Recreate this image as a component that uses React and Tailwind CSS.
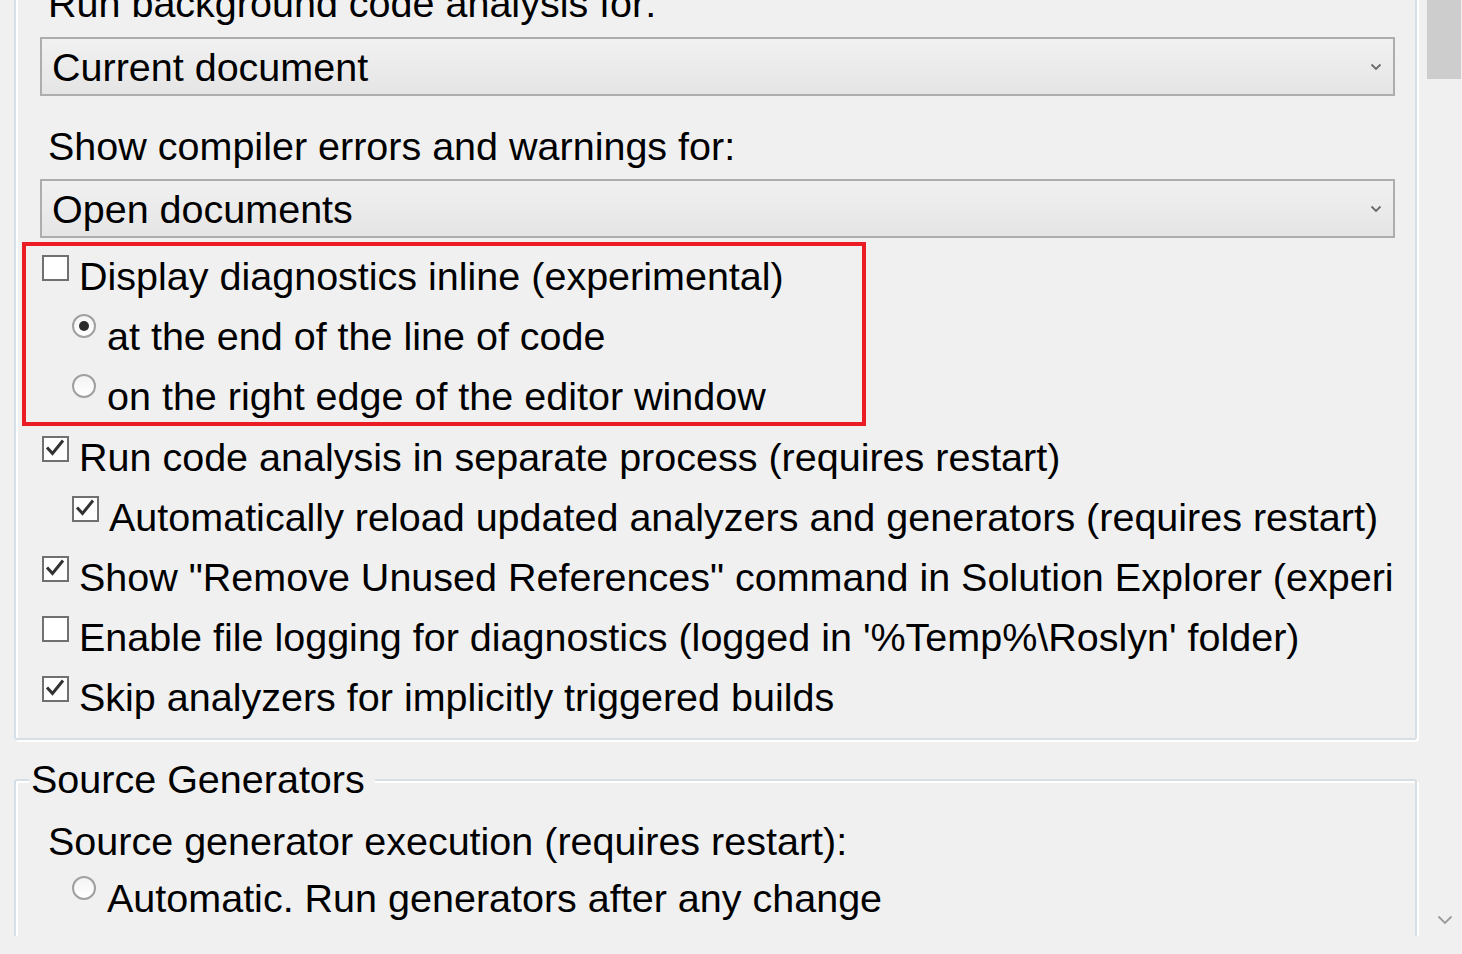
import React from 'react';

const font = "font-['Liberation_Sans',Arial,sans-serif]";

function Checkbox({ checked }) {
  return (
    <div className="w-[27px] h-[26px] shrink-0 border-2 border-[#707070] bg-white mt-[9px]">
      {checked && (
        <svg width="23" height="22" viewBox="0 0 23 22" className="block">
          <path d="M3 9.5 L8.5 15.5 L19 2.5" fill="none" stroke="#333" strokeWidth="3" strokeLinejoin="miter" />
        </svg>
      )}
    </div>
  );
}

function Radio({ checked }) {
  return (
    <div className="w-[24px] h-[24px] shrink-0 mt-[8px] rounded-full border-2 border-[#a0a0a0] bg-linear-to-b from-[#f4f4f4] to-white flex items-center justify-center">
      {checked && <div className="w-[10px] h-[10px] rounded-full bg-[#2a2a2a]" />}
    </div>
  );
}

function CheckRow({ checked, indent, children }) {
  return (
    <div className={`h-[60.2px] flex items-start gap-[10px] w-full overflow-hidden ${indent ? 'pl-[32px]' : 'pl-[2px]'}`}>
      <Checkbox checked={checked} />
      <span className="h-[60.2px] leading-[60.2px] whitespace-nowrap">{children}</span>
    </div>
  );
}

function RadioRow({ checked, children }) {
  return (
    <div className="h-[60.2px] flex items-start gap-[11px] w-full overflow-hidden pl-[32px]">
      <Radio checked={checked} />
      <span className="h-[60.2px] leading-[60.2px] whitespace-nowrap">{children}</span>
    </div>
  );
}

function Label({ children, className = '' }) {
  return <div className={`h-[45px] leading-[45px] ml-[8px] whitespace-nowrap ${className}`}>{children}</div>;
}

function Dropdown({ value, className = '' }) {
  return (
    <div className={`h-[59px] w-[1355px] border-2 border-[#adadad] bg-linear-to-b from-[#f1f1f1] to-[#e5e5e5] flex items-center pl-[10px] pr-[11px] ${className}`}>
      <span className="flex-1 pt-[3px] whitespace-nowrap">{value}</span>
      <svg width="12" height="8" viewBox="0 0 12 8">
        <path d="M1.5 1.5 L6 6 L10.5 1.5" fill="none" stroke="#6a6a6a" strokeWidth="1.8" />
      </svg>
    </div>
  );
}

const groupBox =
  'ml-[14px] w-[1403px] border-2 border-[#d5dfe5] rounded-[3px] shadow-[inset_2px_2px_0_#ffffff,2px_2px_0_#ffffff] pl-[24px] pr-[20px]';

export default function App() {
  return (
    <div className={`w-[1462px] h-[954px] bg-[#f0f0f0] text-black text-[39.5px] overflow-hidden ${font}`}>
      <div className="flex h-[936px]">
        <div className="w-[1425px] h-[936px] overflow-hidden flex flex-col">
          {/* Analysis group */}
          <div className={`${groupBox} mt-[-30px] pt-[9px] pb-[10px] shrink-0`}>
            <Label>Run background code analysis for:</Label>
            <Dropdown value="Current document" className="mt-[11px]" />
            <Label className="mt-[28px]">Show compiler errors and warnings for:</Label>
            <Dropdown value="Open documents" className="mt-[10px]" />

            <div className="mt-[8px]">
              <div className="relative">
                <div className="absolute left-[-18px] top-[-4px] w-[844px] h-[184px] border-4 border-[#ec1c24] pointer-events-none" />
                <CheckRow checked={false}>Display diagnostics inline (experimental)</CheckRow>
                <RadioRow checked>at the end of the line of code</RadioRow>
                <RadioRow>on the right edge of the editor window</RadioRow>
              </div>
              <CheckRow checked>Run code analysis in separate process (requires restart)</CheckRow>
              <CheckRow checked indent>
                Automatically reload updated analyzers and generators (requires restart)
              </CheckRow>
              <CheckRow checked>Show "Remove Unused References" command in Solution Explorer (experimental)</CheckRow>
              <CheckRow checked={false}>Enable file logging for diagnostics (logged in '%Temp%\Roslyn' folder)</CheckRow>
              <CheckRow checked>Skip analyzers for implicitly triggered builds</CheckRow>
            </div>
          </div>

          {/* Source Generators group */}
          <div className={`${groupBox} relative mt-[39px] pt-[38px] shrink-0 h-[400px]`}>
            <div className="absolute left-[13px] top-[-24px] h-[45px] leading-[45px] pl-[2px] pr-[10px] bg-[#f0f0f0] whitespace-nowrap">
              Source Generators
            </div>
            <Label>Source generator execution (requires restart):</Label>
            <div className="mt-[4px]">
              <RadioRow>Automatic. Run generators after any change</RadioRow>
            </div>
          </div>
        </div>

        {/* Scrollbar */}
        <div className="w-[37px] h-[936px] flex flex-col pl-[2px]">
          <div className="w-[34px] h-[79px] bg-[#cdcdcd]" />
          <div className="flex-1" />
          <svg width="16" height="10" viewBox="0 0 16 10" className="ml-[10px] mb-[11px]">
            <path d="M1.5 1.5 L8 8 L14.5 1.5" fill="none" stroke="#9a9a9a" strokeWidth="1.8" />
          </svg>
        </div>
      </div>
    </div>
  );
}
